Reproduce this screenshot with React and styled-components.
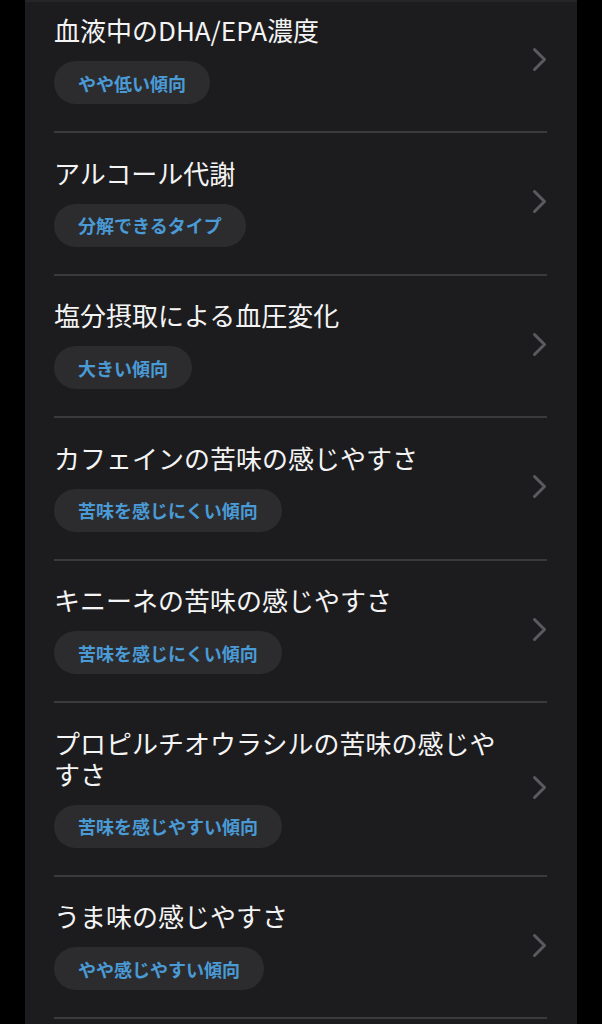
import React from "react";
import styled, { createGlobalStyle } from "styled-components";

const GlobalStyle = createGlobalStyle`
  html, body {
    margin: 0;
    padding: 0;
    background: #000;
  }
  body {
    font-family: "Noto Sans CJK JP", "Noto Sans", sans-serif;
  }
`;

const Page = styled.div`
  width: 552px;
  height: 1024px;
  margin: 0 auto;
  background: #1c1c1e;
  border-top: 2px solid #252527;
  box-sizing: border-box;
  overflow: hidden;
`;

const List = styled.ul`
  list-style: none;
  margin: -11.5px 0 0;
  padding: 0 30px 0 29px;
`;

const Row = styled.li`
  display: flex;
  align-items: center;
  gap: 24px;
  padding: 23.5px 0 27px;
  border-bottom: 2px solid #3a3a3c;
`;

const Body = styled.div`
  flex: 1;
  min-width: 0;
`;

const Title = styled.div`
  color: #f4f4f5;
  font-size: 26px;
  line-height: 31px;
  font-weight: 400;
`;

const Badge = styled.span`
  display: inline-flex;
  align-items: center;
  height: 43px;
  margin-top: 16px;
  padding: 0 24px;
  border-radius: 22px;
  background: #2c2c2e;
  color: #4a9ad6;
  font-size: 18px;
  font-weight: 700;
`;

const Chevron = styled.svg`
  flex: none;
  width: 15px;
  height: 25px;
`;

const items = [
  { title: "血液中のDHA/EPA濃度", result: "やや低い傾向" },
  { title: "アルコール代謝", result: "分解できるタイプ" },
  { title: "塩分摂取による血圧変化", result: "大きい傾向" },
  { title: "カフェインの苦味の感じやすさ", result: "苦味を感じにくい傾向" },
  { title: "キニーネの苦味の感じやすさ", result: "苦味を感じにくい傾向" },
  { title: "プロピルチオウラシルの苦味の感じやすさ", result: "苦味を感じやすい傾向" },
  { title: "うま味の感じやすさ", result: "やや感じやすい傾向" },
];

function ArrowIcon() {
  return (
    <Chevron viewBox="0 0 15 25">
      <polyline
        points="2.5,2.5 12.5,12.5 2.5,22.5"
        fill="none"
        stroke="#5b5b5f"
        strokeWidth="3"
        strokeLinecap="round"
        strokeLinejoin="round"
      />
    </Chevron>
  );
}

export default function App() {
  return (
    <>
      <GlobalStyle />
      <Page>
        <List>
          {items.map((item) => (
            <Row key={item.title}>
              <Body>
                <Title>{item.title}</Title>
                <Badge>{item.result}</Badge>
              </Body>
              <ArrowIcon />
            </Row>
          ))}
        </List>
      </Page>
    </>
  );
}
